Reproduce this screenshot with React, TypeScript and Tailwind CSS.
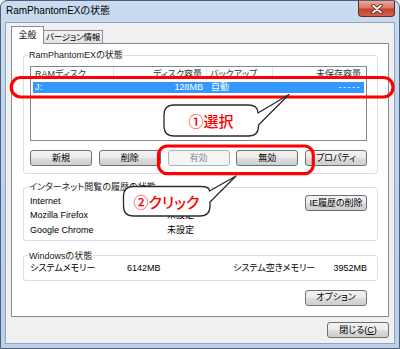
import React from "react";

function Btn({
  children,
  disabled = false,
  className = "",
}: {
  children: React.ReactNode;
  disabled?: boolean;
  className?: string;
}) {
  return (
    <div
      className={`flex h-[16px] w-[62px] shrink-0 items-center justify-center whitespace-nowrap rounded-[3px] border text-[9px] leading-none ${
        disabled
          ? "border-[#adb2b5] bg-[#f4f4f4] text-[#8d8d8d]"
          : "border-[#707070] bg-[linear-gradient(#f2f2f2_0%,#ebebeb_50%,#dddddd_51%,#cfcfcf_100%)] text-black"
      } ${className}`}
    >
      {children}
    </div>
  );
}

function Group({
  title,
  className = "",
  children,
}: {
  title: string;
  className?: string;
  children: React.ReactNode;
}) {
  return (
    <fieldset className={`min-w-0 rounded-[3px] border border-[#d5dfe5] pl-[6px] pr-[10px] ${className}`}>
      <legend className="-ml-[2px] whitespace-nowrap px-[1px] text-[9px] leading-[12px] text-[#1a1a1a]">{title}</legend>
      {children}
    </fieldset>
  );
}

export default function App() {
  const rows: [string, string][] = [
    ["Internet", "未設定"],
    ["Mozilla Firefox", "未設定"],
    ["Google Chrome", "未設定"],
  ];
  return (
    <div className="relative h-[349px] w-[400px] overflow-hidden font-['Liberation_Sans','Noto_Sans_CJK_JP',sans-serif] text-black [font-feature-settings:'palt']">
      <div className="flex h-full w-full flex-col rounded-t-[7px] border border-[#4d6079] bg-[linear-gradient(180deg,#c9dcf0_0%,#bdd3eb_40%,#b9d0ea_100%)]">
        {/* title bar */}
        <div className="flex h-[21px] shrink-0 items-start justify-between">
          <div className="pl-[5px] pt-[3px] text-[10px] leading-[14px] text-black">RamPhantomEXの状態</div>
          <div className="mr-[4px] flex h-[16px] w-[37px] items-center justify-center rounded-b-[4px] border border-t-0 border-[#6a2820] bg-[linear-gradient(#eba89a_0%,#d97a68_45%,#c5412f_55%,#d4624c_100%)]">
            <svg width="12" height="10" viewBox="0 0 12 10">
              <path d="M2 1.5 L10 8.5 M10 1.5 L2 8.5" stroke="#4a1a14" strokeWidth="3.4" strokeLinecap="round" />
              <path d="M2 1.5 L10 8.5 M10 1.5 L2 8.5" stroke="#ffffff" strokeWidth="1.8" strokeLinecap="round" />
            </svg>
          </div>
        </div>

        {/* client */}
        <div className="mx-[4px] mb-[4px] flex flex-1 flex-col border border-[#8ea4bf] bg-[#f0f0f0]">
          {/* tabs */}
          <div className="flex h-[20px] shrink-0 items-end pl-[5px]">
            <div className="relative z-10 -mb-[1px] flex h-[18px] w-[33px] justify-center border border-b-0 border-[#898c95] bg-white pt-[1px] text-[9px] leading-[14px]">
              全般
            </div>
            <div className="-ml-[1px] flex h-[13px] w-[60px] justify-center whitespace-nowrap border border-b-0 border-[#898c95] bg-[linear-gradient(#f3f3f3,#e2e2e2)] text-[8.5px] leading-[12px] tracking-[-0.2px]">
              バージョン情報
            </div>
          </div>

          {/* panel */}
          <div className="mx-[5px] h-[274px] shrink-0 border border-[#898c95] bg-white pl-[11px] pr-[10px] pt-[5px]">
            <Group title="RamPhantomEXの状態" className="pb-[7px]">
              <div className="mt-[5px] h-[75px] border border-[#828790] bg-white">
                <div className="flex h-[14px] whitespace-nowrap text-[9px] leading-[14px] text-[#333]">
                  <div className="w-[83px] border-r border-[#e5e5e5] pl-[4px]">RAMディスク</div>
                  <div className="w-[93px] border-r border-[#e5e5e5] pr-[4px] text-right">ディスク容量</div>
                  <div className="w-[66px] border-r border-[#e5e5e5] pl-[3px]">バックアップ</div>
                  <div className="flex-1 pr-[5px] text-right">未保存容量</div>
                </div>
                <div className="mx-[2px] mt-[1px] flex h-[11px] whitespace-nowrap bg-[#3399ff] text-[9px] leading-[11px] text-white">
                  <div className="w-[81px] pl-[2px]">J:</div>
                  <div className="w-[93px] pr-[4px] text-right">128MB</div>
                  <div className="w-[66px] pl-[4px]">自動</div>
                  <div className="flex-1 pr-[3px] text-right tracking-[1.5px]">-----</div>
                </div>
              </div>
              <div className="mt-[9px] flex justify-between">
                <Btn>新規</Btn>
                <Btn>削除</Btn>
                <Btn disabled>有効</Btn>
                <Btn>無効</Btn>
                <Btn>プロパティ</Btn>
              </div>
            </Group>

            <Group title="インターネット閲覧の履歴の状態" className="mt-[7px] pb-[2px]">
              <div className="mt-[1px] flex">
                <div className="flex-1">
                  {rows.map(([k, v]) => (
                    <div key={k} className="flex h-[14.5px] items-center whitespace-nowrap text-[9px]">
                      <span className="w-[137px]">{k}</span>
                      <span>{v}</span>
                    </div>
                  ))}
                </div>
                <Btn className="mt-[1px]">IE履歴の削除</Btn>
              </div>
            </Group>

            <Group title="Windowsの状態" className="mt-[9px] pb-[4px]">
              <div className="flex h-[14px] items-center whitespace-nowrap text-[9px]">
                <span className="w-[97px]">システムメモリー</span>
                <span className="w-[106px]">6142MB</span>
                <span>システム空きメモリー</span>
                <span className="ml-auto">3952MB</span>
              </div>
            </Group>

            <div className="mt-[9px] flex justify-end pr-[11px]">
              <Btn>オプション</Btn>
            </div>
          </div>

          <div className="flex justify-end pr-[5px] pt-[5px]">
            <Btn>
              閉じる(<span className="underline">C</span>)
            </Btn>
          </div>
        </div>
      </div>

      {/* annotation overlay */}
      <svg className="pointer-events-none absolute left-0 top-0" width="400" height="349" viewBox="0 0 400 349">
        <rect x="11.3" y="77.5" width="381.7" height="19.5" rx="9.5" fill="none" stroke="#ff0000" strokeWidth="3.2" />
        <rect x="158.5" y="146" width="154.8" height="27.7" rx="9" fill="none" stroke="#ff0000" strokeWidth="3.2" />
        <path
          d="M174 105 H248 Q258 105 258 113 L289 94.5 L258.5 125 V126 Q258.5 136 248.5 136 H174 Q164 136 164 126 V115 Q164 105 174 105 Z"
          fill="#ffffff"
          stroke="#2b2b2b"
          strokeWidth="1.3"
          strokeLinejoin="round"
        />
        <path
          d="M133.5 186.5 H201 Q209.5 186.5 209.5 191 L236 176 L210 202 V206 Q210 216 200 216 H133.5 Q123.5 216 123.5 206 V196.5 Q123.5 186.5 133.5 186.5 Z"
          fill="#ffffff"
          stroke="#2b2b2b"
          strokeWidth="1.3"
          strokeLinejoin="round"
        />
      </svg>
      <div className="pointer-events-none absolute left-[164px] top-[105px] flex h-[31px] w-[94px] items-center justify-center font-['Noto_Sans_CJK_JP',sans-serif] text-[15px] font-medium leading-none text-[#ff0000]">
        ①選択
      </div>
      <div className="pointer-events-none absolute left-[123px] top-[186px] flex h-[30px] w-[87px] items-center justify-center font-['Noto_Sans_CJK_JP',sans-serif] text-[15px] font-medium leading-none text-[#ff0000]">
        ②クリック
      </div>
    </div>
  );
}
